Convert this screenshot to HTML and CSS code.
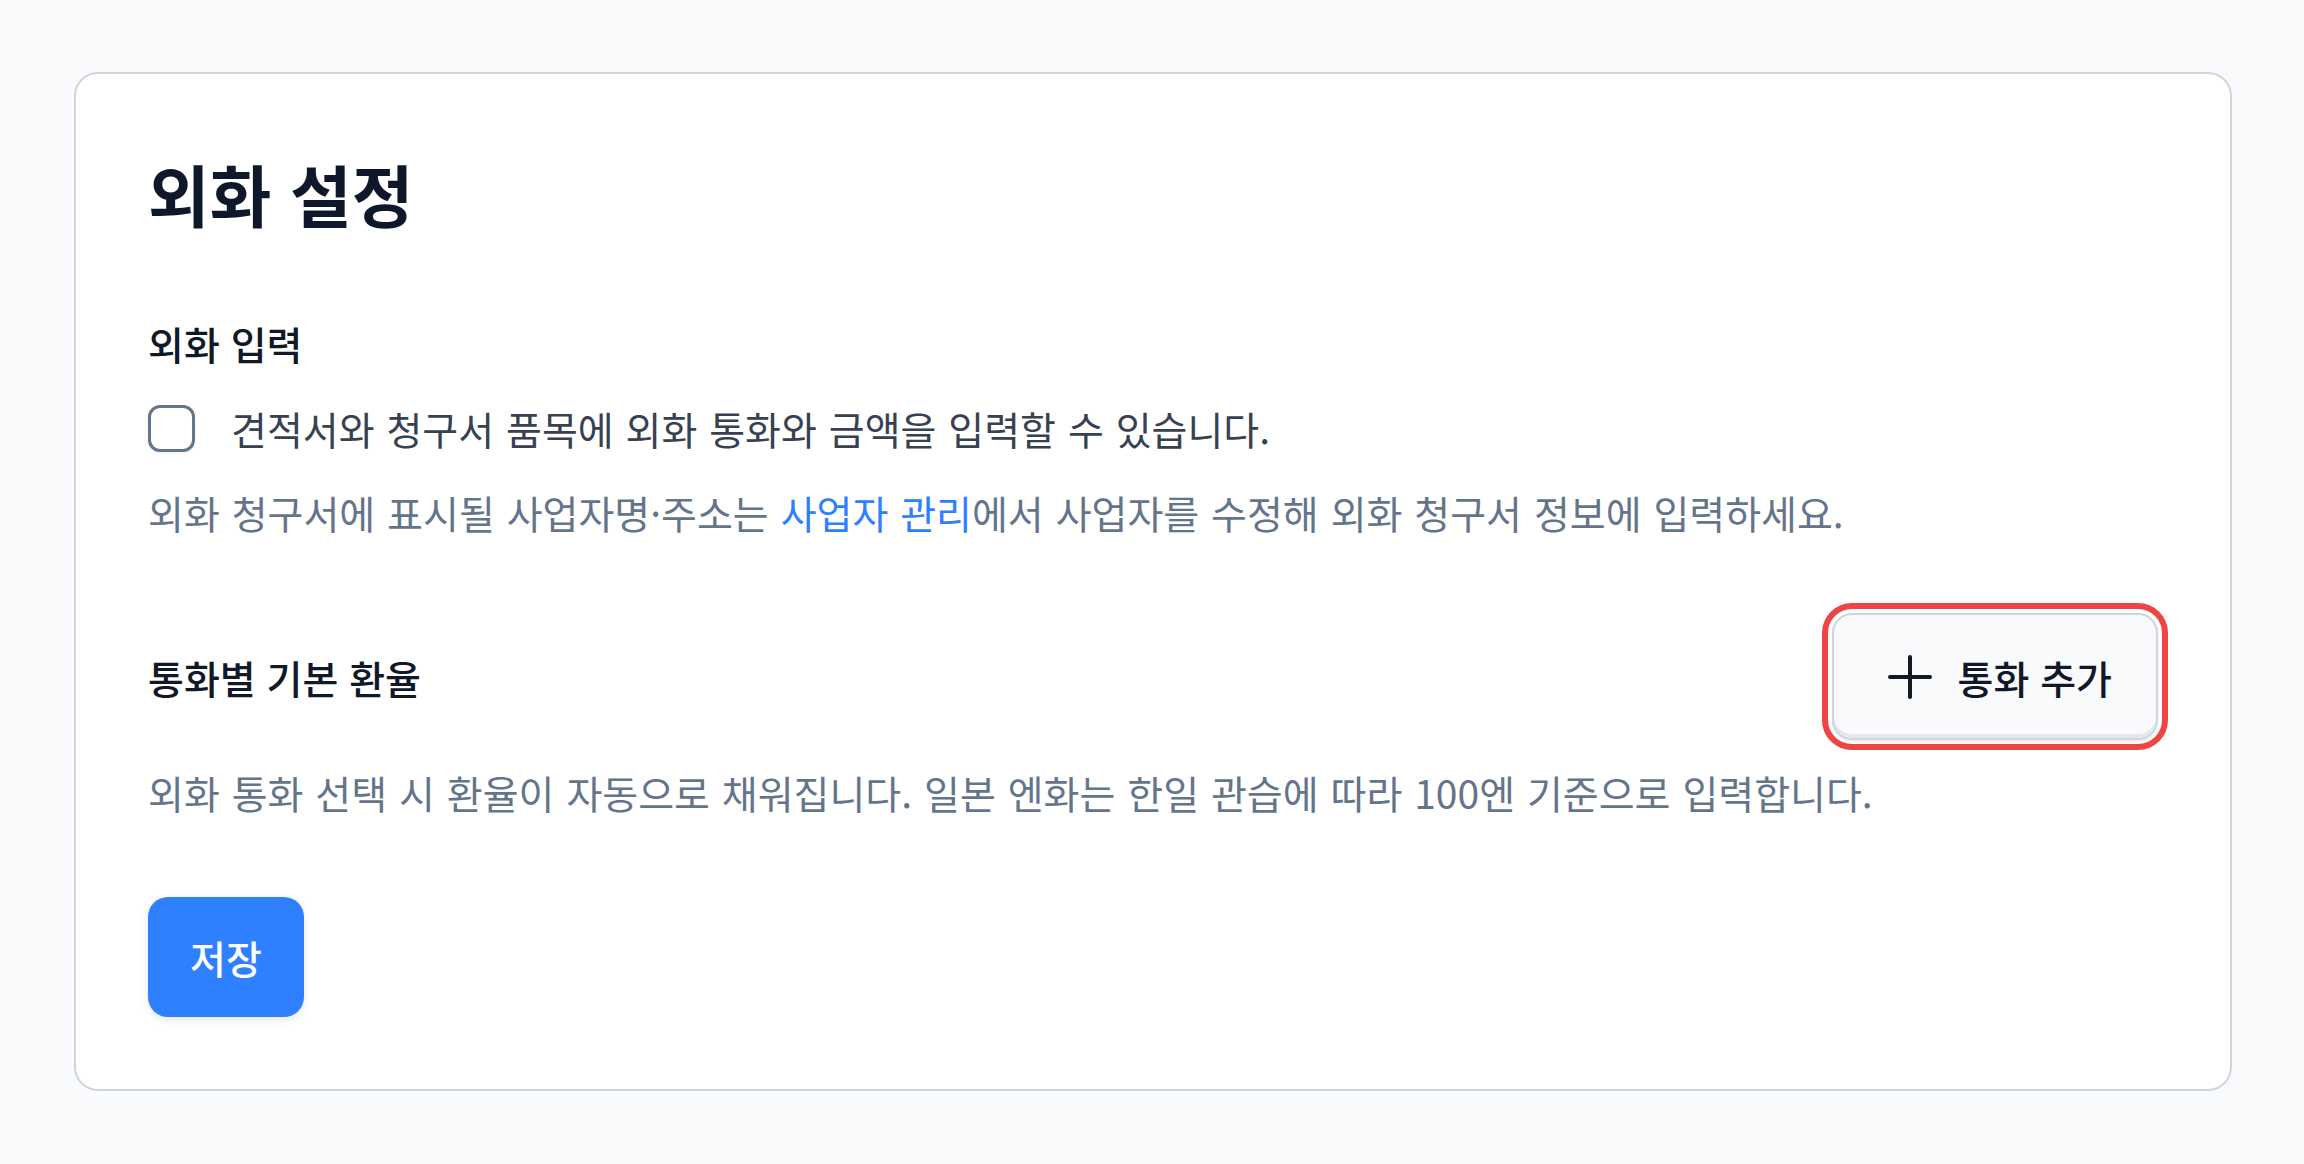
FILE: index.html
```html
<!DOCTYPE html>
<html lang="ko">
<head>
    <meta charset="UTF-8">
    <meta name="viewport" content="width=device-width, initial-scale=1.0">
    <title>외화 설정</title>
    <link rel="stylesheet" href="styles.css">
</head>
<body>
    <div class="settings">
        <h1 class="title">외화 설정</h1>

        <section class="block">
            <h2 class="label">외화 입력</h2>
            <label class="check">
                <input type="checkbox" class="checkbox" id="foreignInput">
                <span>견적서와 청구서 품목에 외화 통화와 금액을 입력할 수 있습니다.</span>
            </label>
            <p class="hint">외화 청구서에 표시될 사업자명·주소는 <a href="#" class="link">사업자 관리</a>에서 사업자를 수정해 외화 청구서 정보에 입력하세요.</p>
        </section>

        <section class="block rates">
            <div class="row">
                <h2 class="label">통화별 기본 환율</h2>
                <button type="button" class="add" id="addBtn">
                    <svg class="icon" viewBox="0 0 24 24" fill="none" stroke="currentColor" stroke-width="2" stroke-linecap="round">
                        <path d="M12 2v20M2 12h20"/>
                    </svg>
                    <span>통화 추가</span>
                </button>
            </div>
            <p class="hint note">외화 통화 선택 시 환율이 자동으로 채워집니다. 일본 엔화는 한일 관습에 따라 100엔 기준으로 입력합니다.</p>
        </section>

        <button type="button" class="save" id="saveBtn">저장</button>
    </div>
</body>
</html>
```

FILE: styles.css
```css
body {
    margin: 0;
    padding: 72px 72px 72px 74px;
    background: #f8fafc;
    font-family: "Noto Sans CJK KR", "Noto Sans", sans-serif;
    color: #111827;
}
.settings {
    background: white;
    border: 2px solid #d1d5db;
    border-radius: 24px;
    padding: 72px 72px 72px 72px;
}
.title {
    margin: 0 0 76px;
    font-size: 67px;
    line-height: 93px;
    font-weight: 700;
    color: #0f172a;
}
.label {
    margin: 0;
    font-size: 39px;
    line-height: 56px;
    font-weight: 500;
    color: #111827;
}
.check {
    display: flex;
    align-items: center;
    gap: 36px;
    margin-top: 29px;
    font-size: 39px;
    line-height: 56px;
    word-spacing: 1px;
    color: #374151;
    cursor: pointer;
}
.checkbox {
    appearance: none;
    margin: 0;
    width: 47px;
    height: 47px;
    border: 3px solid #64748b;
    border-radius: 12px;
    background: white;
    box-shadow: 0 1px 3px rgba(15, 23, 42, 0.08);
    cursor: pointer;
}
.hint {
    margin: 28px 0 0;
    font-size: 39px;
    line-height: 56px;
    word-spacing: 1px;
    color: #64748b;
}
.link {
    color: #2f80ff;
    text-decoration: none;
}
.rates {
    margin-top: 73px;
}
.row {
    display: flex;
    justify-content: space-between;
    align-items: center;
}
.note {
    margin-top: 24px;
}
.add {
    display: flex;
    align-items: center;
    gap: 24px;
    padding: 34px 44px 33px 52px;
    font-family: inherit;
    font-size: 39px;
    line-height: 56px;
    font-weight: 500;
    color: #111827;
    background: #f8fafc;
    border: 2px solid #d1d5db;
    border-radius: 20px;
    box-shadow: inset 0 -4px 0 #e5e7eb, 0 2px 3px rgba(15, 23, 42, 0.08);
    outline: 6px solid #ef4444;
    outline-offset: 4px;
    cursor: pointer;
}
.icon {
    width: 48px;
    height: 48px;
}
.save {
    margin-top: 77px;
    padding: 32px 42px;
    font-family: inherit;
    font-size: 39px;
    line-height: 56px;
    font-weight: 500;
    color: white;
    background: #2f80ff;
    border: 0;
    border-radius: 20px;
    box-shadow: 0 3px 8px rgba(15, 23, 42, 0.1);
    cursor: pointer;
}
```
